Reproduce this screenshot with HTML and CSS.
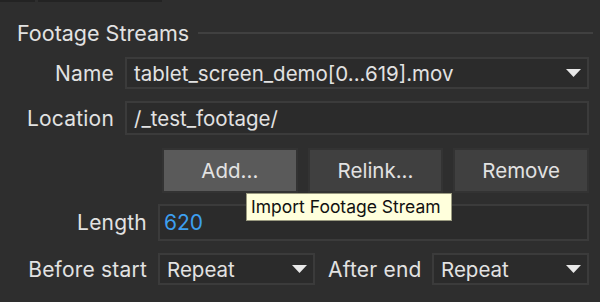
FILE: index.html
```html
<!DOCTYPE html>
<html lang="en">
<head>
    <meta charset="UTF-8">
    <title>Footage Streams</title>
    <link rel="stylesheet" href="styles.css">
</head>
<body>

<div class="tab-strip">
    <div class="tab tab-a"></div>
    <div class="tab tab-b"></div>
</div>

<div class="panel">
    <div class="group-title">
        <span>Footage Streams</span>
        <div class="rule"></div>
    </div>

    <div class="row row-name">
        <label class="label label-wide">Name</label>
        <div class="field select">
            <span class="value">tablet_screen_demo[0...619].mov</span>
            <svg class="arrow" width="15" height="8" viewBox="0 0 15 8"><polygon points="0,0 15,0 7.5,8" fill="#e8e8e8"/></svg>
        </div>
    </div>

    <div class="row row-location">
        <label class="label label-wide">Location</label>
        <div class="field">
            <span class="value">/_test_footage/</span>
        </div>
    </div>

    <div class="buttons">
        <button class="btn btn-hover">Add...</button>
        <button class="btn">Relink...</button>
        <button class="btn">Remove</button>
    </div>

    <div class="row row-length">
        <label class="label label-long">Length</label>
        <div class="field">
            <span class="value number">620</span>
        </div>
    </div>

    <div class="row row-repeat">
        <label class="label label-long">Before start</label>
        <div class="field select select-small">
            <span class="value">Repeat</span>
            <svg class="arrow" width="15" height="8" viewBox="0 0 15 8"><polygon points="0,0 15,0 7.5,8" fill="#e8e8e8"/></svg>
        </div>
        <label class="label label-inline">After end</label>
        <div class="field select">
            <span class="value">Repeat</span>
            <svg class="arrow" width="15" height="8" viewBox="0 0 15 8"><polygon points="0,0 15,0 7.5,8" fill="#e8e8e8"/></svg>
        </div>
    </div>
</div>

<div class="tooltip">Import Footage Stream</div>

</body>
</html>
```

FILE: styles.css
```css
body {
    margin: 0;
    background-color: #2e2e2e;
    font-family: Inter, "Noto Sans", sans-serif;
    color: #e2e2e2;
    overflow: hidden;
    width: 600px;
    height: 302px;
}

.tab-strip {
    display: flex;
    height: 2px;
}

.tab {
    background-color: #232323;
    height: 2px;
}

.tab-a {
    width: 35px;
}

.tab-b {
    width: 124px;
    margin-left: 3px;
}

.panel {
    padding: 0 11px 0 17px;
}

.group-title {
    display: flex;
    align-items: center;
    height: 26px;
    margin-top: 18px;
    margin-bottom: 11px;
    margin-right: -4px;
    font-size: 21.5px;
}

.rule {
    flex: 1;
    height: 2px;
    background-color: #404040;
    margin-left: 9px;
}

.row {
    display: flex;
    align-items: center;
}

.row-name {
    height: 32px;
}

.row-location {
    height: 34px;
    margin-top: 12px;
}

.row-length {
    height: 37px;
    margin-top: 11px;
}

.row-repeat {
    height: 32px;
    margin-top: 12px;
}

.label {
    font-size: 21px;
    letter-spacing: 0.2px;
    text-align: right;
    margin-right: 11px;
    flex-shrink: 0;
    white-space: nowrap;
}

.label-wide {
    width: 97px;
}

.label-long {
    width: 130px;
}

.label-inline {
    width: 93px;
    margin-left: 13px;
    text-align: left;
}

.field {
    flex: 1;
    height: 100%;
    box-sizing: border-box;
    border: 2px solid #3b3b3b;
    background-color: #2b2b2b;
    display: flex;
    align-items: center;
    padding: 0 6px 0 7px;
    font-size: 20.5px;
}

.value {
    flex: 1;
    white-space: nowrap;
}

.number {
    color: #3d9ff0;
    font-size: 21px;
    margin-left: -3px;
}

.select-small {
    flex: 0 0 157px;
}

.arrow {
    flex-shrink: 0;
}

.buttons {
    display: flex;
    gap: 10px;
    margin-left: 145px;
    margin-top: 13px;
    height: 45px;
}

.btn {
    flex: 1;
    border: 2px solid #333;
    background-color: #404040;
    color: #e2e2e2;
    font-family: Inter, "Noto Sans", sans-serif;
    font-size: 20.5px;
    padding: 0;
}

.btn-hover {
    background-color: #5a5a5a;
}

.tooltip {
    position: absolute;
    left: 246px;
    top: 193px;
    width: 206px;
    height: 28px;
    box-sizing: border-box;
    background-color: #ffffdc;
    color: #111;
    font-size: 17.5px;
    line-height: 26px;
    padding-left: 4px;
    border: 1px solid #9a9a80;
}
```
